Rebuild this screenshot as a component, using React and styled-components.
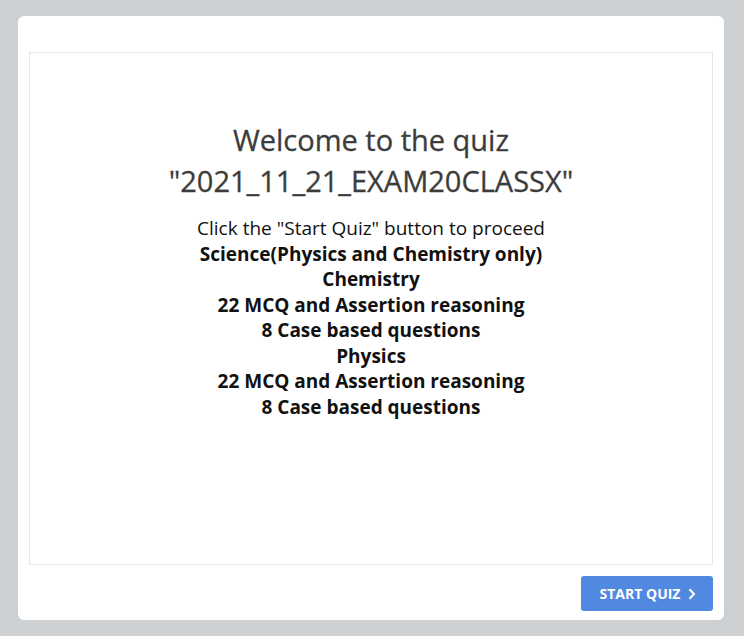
import React from 'react'
import styled, { createGlobalStyle } from 'styled-components'

const GlobalStyle = createGlobalStyle`
  html, body {
    margin: 0;
    padding: 0;
    background: #cdd0d3;
    font-family: "Open Sans", "Liberation Sans", sans-serif;
  }
`

const Page = styled.div`
  width: 744px;
  height: 636px;
  box-sizing: border-box;
  padding: 16px 20px 16px 18px;
`

const Card = styled.section`
  height: 604px;
  box-sizing: border-box;
  background: #fff;
  border-radius: 6px;
  padding: 36px 11px 9px 11px;
  display: flex;
  flex-direction: column;
`

const Stage = styled.div`
  height: 513px;
  box-sizing: border-box;
  border: 1px solid #e6e6e6;
  display: flex;
  flex-direction: column;
  align-items: center;
  padding-top: 66px;
  text-align: center;
`

const Title = styled.h2`
  margin: 0;
  font-size: 29px;
  font-weight: 400;
  line-height: 41px;
  color: #3c3c3c;
  -webkit-text-stroke: 0.3px #3c3c3c;
`

const Intro = styled.div`
  margin-top: 15px;
  font-size: 19px;
  line-height: 25.5px;
  color: #111;
`

const Line = styled.div`
  font-weight: ${p => (p.$bold ? 700 : 400)};
`

const Footer = styled.div`
  display: flex;
  justify-content: flex-end;
  padding-top: 11px;
`

const StartButton = styled.button`
  width: 132px;
  height: 35px;
  border: none;
  border-radius: 3px;
  background: #5189e0;
  color: #fff;
  font-family: inherit;
  font-size: 14px;
  font-weight: 700;
  display: flex;
  align-items: center;
  justify-content: center;
  gap: 8px;
  padding: 0 0 0 2px;
  cursor: pointer;
`

const lines = [
  'Science(Physics and Chemistry only)',
  'Chemistry',
  '22 MCQ and Assertion reasoning',
  '8 Case based questions',
  'Physics',
  '22 MCQ and Assertion reasoning',
  '8 Case based questions'
]

export default function App () {
  return (
    <>
      <GlobalStyle />
      <Page>
        <Card>
          <Stage>
            <Title>
              Welcome to the quiz
              <br />
              "2021_11_21_EXAM20CLASSX"
            </Title>
            <Intro>
              <Line>Click the "Start Quiz" button to proceed</Line>
              {lines.map((l, i) => (
                <Line key={i} $bold>{l}</Line>
              ))}
            </Intro>
          </Stage>
          <Footer>
            <StartButton>
              START QUIZ
              <svg width='8' height='12' viewBox='0 0 8 12'>
                <path d='M1.5 1.2 L6 6 L1.5 10.8' fill='none' stroke='#fff' strokeWidth='2' />
              </svg>
            </StartButton>
          </Footer>
        </Card>
      </Page>
    </>
  )
}
